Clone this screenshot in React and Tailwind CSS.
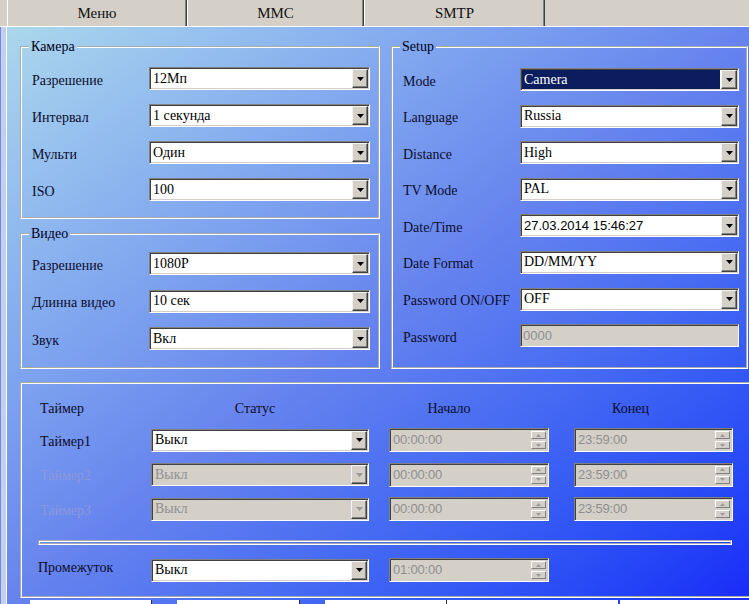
const SERIF = "font-['Liberation_Serif','Times_New_Roman',serif]";
const SANS = "font-['Liberation_Sans',Arial,sans-serif]";

const camera = [
  ['Разрешение', '12Мп'],
  ['Интервал', '1 секунда'],
  ['Мульти', 'Один'],
  ['ISO', '100'],
];

const video = [
  ['Разрешение', '1080P'],
  ['Длинна видео', '10 сек'],
  ['Звук', 'Вкл'],
];

const timers = [
  { name: 'Таймер1', on: true },
  { name: 'Таймер2', on: false },
  { name: 'Таймер3', on: false },
];

const DropArrow = ({ disabled }) => (
  <span className="flex h-full w-[16px] shrink-0 items-center justify-center border border-t-[#f4f4f4] border-l-[#f4f4f4] border-r-[#404040] border-b-[#404040] bg-[#d4d0c8] shadow-[inset_-1px_-1px_0_#808080]">
    <svg width="7" height="4" viewBox="0 0 7 4">
      <path d="M0 0h7L3.5 4z" fill={disabled ? '#9a9a9a' : '#000'} />
    </svg>
  </span>
);

const Combo = ({ value, selected, disabled, sans, className = '' }) => (
  <div
    className={`flex h-[23px] shrink-0 border border-t-[#808080] border-l-[#808080] border-r-white border-b-white p-[1px] shadow-[inset_1px_1px_0_#404040,inset_-1px_-1px_0_#d4d0c8] ${
      disabled ? 'bg-[#d4d0c8]' : 'bg-white'
    } ${className}`}
  >
    <div className="flex min-w-0 flex-1 items-center pr-[1px]">
      <span
        className={`flex h-full flex-1 items-center whitespace-nowrap pl-[2px] leading-none ${
          sans ? `${SANS} text-[13px]` : 'text-[14px]'
        } ${selected ? 'bg-[#0b1d5e] text-white' : disabled ? 'text-[#8f8f8f]' : 'text-black'}`}
      >
        {value}
      </span>
    </div>
    <DropArrow disabled={disabled} />
  </div>
);

const Edit = ({ value, className = '' }) => (
  <div
    className={`flex h-[23px] shrink-0 items-center border border-t-[#808080] border-l-[#808080] border-r-white border-b-white bg-[#d4d0c8] pl-[2px] shadow-[inset_1px_1px_0_#404040,inset_-1px_-1px_0_#d4d0c8] ${SANS} text-[13px] text-[#8f8f8f] ${className}`}
  >
    {value}
  </div>
);

const SpinBtn = ({ up }) => (
  <span className="flex h-[8px] w-[15px] items-center justify-center border border-t-white border-l-white border-r-[#808080] border-b-[#808080] bg-[#d4d0c8]">
    <svg width="5" height="3" viewBox="0 0 5 3">
      <path d={up ? 'M2.5 0L5 3H0z' : 'M0 0h5L2.5 3z'} fill="#9a9a9a" />
    </svg>
  </span>
);

const Spin = ({ value, className = '' }) => (
  <div
    className={`flex h-[24px] shrink-0 border border-t-[#808080] border-l-[#808080] border-r-white border-b-white bg-[#d4d0c8] p-[1px] shadow-[inset_1px_1px_0_#404040,inset_-1px_-1px_0_#d4d0c8] ${className}`}
  >
    <span className={`flex flex-1 items-center pl-[2px] ${SANS} text-[13px] tracking-[-0.2px] text-[#8f8f8f]`}>{value}</span>
    <div className="flex flex-col justify-center gap-[2px] pr-[1px]">
      <SpinBtn up />
      <SpinBtn />
    </div>
  </div>
);

const Group = ({ title, className = '', children }) => (
  <fieldset className={`border-2 border-white [border-style:groove] ${className}`}>
    <legend className="ml-[-3px] px-[2px] text-[14px] leading-[15px] text-[#000020]">{title}</legend>
    {children}
  </fieldset>
);

const Row = ({ label, children }) => (
  <div className="flex h-[23px] items-center">
    <span className="flex-1 whitespace-nowrap pt-[3px] text-[14px] text-[#0c0c2c]">{label}</span>
    {children}
  </div>
);

const Tab = ({ label, width }) => (
  <div
    className={`flex h-full items-center justify-center border-l border-l-white border-r border-r-[#404040] shadow-[inset_-1px_0_0_#808080] text-[15px] text-[#111] ${width}`}
  >
    {label}
  </div>
);

const App = () => {
  return (
    <div className={`flex h-[604px] w-[749px] flex-col overflow-hidden ${SERIF} text-[#0c0c2c]`}>
      {/* tabs */}
      <div className="flex h-[27px] shrink-0 border-b border-b-white bg-[#d4d0c8] pl-[7px]">
        <Tab label="Меню" width="w-[180px]" />
        <Tab label="MMC" width="w-[177px]" />
        <Tab label="SMTP" width="w-[181px]" />
      </div>

      <div className="flex min-h-0 flex-1 bg-linear-to-br from-[#acd8ec] via-[#6784ee] to-[#1a28f8]">
        <div className="w-[7px] shrink-0 border-l border-l-[#6f8ae0] border-r border-r-white bg-[#c4cfee]" />

        <div className="min-w-0 flex-1 overflow-hidden pl-[13px] pt-[12px]">
          <div className="flex gap-[11px]">
            {/* left column */}
            <div className="flex w-[360px] shrink-0 flex-col">
              <Group title="Камера" className="pl-[10px] pr-[8px] pt-[13px] pb-[16px]">
                <div className="flex flex-col gap-[14px]">
                  {camera.map(([label, value]) => (
                    <Row key={label} label={label}>
                      <Combo value={value} className="w-[221px]" />
                    </Row>
                  ))}
                </div>
              </Group>
              <Group title="Видео" className="mt-[7px] pl-[10px] pr-[8px] pt-[11px] pb-[17px]">
                <div className="flex flex-col gap-[14.5px]">
                  {video.map(([label, value]) => (
                    <Row key={label} label={label}>
                      <Combo value={value} className="w-[221px]" />
                    </Row>
                  ))}
                </div>
              </Group>
            </div>

            {/* setup */}
            <Group title="Setup" className="w-[357px] shrink-0 pl-[10px] pr-[7px] pt-[14px] pb-[20px]">
              <div className="flex flex-col gap-[13.6px]">
                <Row label="Mode">
                  <Combo value="Camera" selected className="w-[219px]" />
                </Row>
                <Row label="Language">
                  <Combo value="Russia" className="w-[219px]" />
                </Row>
                <Row label="Distance">
                  <Combo value="High" className="w-[219px]" />
                </Row>
                <Row label="TV Mode">
                  <Combo value="PAL" className="w-[219px]" />
                </Row>
                <Row label="Date/Time">
                  <Combo value="27.03.2014 15:46:27" sans className="w-[219px]" />
                </Row>
                <Row label="Date Format">
                  <Combo value="DD/MM/YY" className="w-[219px]" />
                </Row>
                <Row label="Password ON/OFF">
                  <Combo value="OFF" className="w-[219px]" />
                </Row>
                <Row label="Password">
                  <Edit value="0000" className="w-[219px]" />
                </Row>
              </div>
            </Group>
          </div>

          {/* timers */}
          <div className="mt-[13px] w-[745px] border-2 border-white pl-[18px] pt-[16px] pb-[14px] [border-style:groove]">
            <div className="flex h-[16px] items-center text-[14px] text-[#0c0c2c]">
              <span className="w-[111px]">Таймер</span>
              <span className="w-[218px] pr-[10px] text-center">Статус</span>
              <span className="ml-[20px] w-[160px] pr-[40px] text-center">Начало</span>
              <span className="ml-[25px] w-[159px] pr-[46px] text-center">Конец</span>
            </div>
            <div className="mt-[12px] flex flex-col gap-[10.5px]">
              {timers.map((t) => (
                <div key={t.name} className="flex h-[24px] items-center">
                  <span className={`w-[111px] pt-[2px] text-[14px] ${t.on ? 'text-[#0c0c2c]' : 'text-[#8c98dc]'}`}>{t.name}</span>
                  <Combo value="Выкл" disabled={!t.on} className="w-[218px]" />
                  <Spin value="00:00:00" className="ml-[20px] w-[160px]" />
                  <Spin value="23:59:00" className="ml-[25px] w-[159px]" />
                </div>
              ))}
            </div>
            <div className="ml-[-2px] mt-[19px] h-[5px] w-[694px] border-2 border-white [border-style:groove]" />
            <div className="mt-[13px] flex h-[24px] items-center">
              <span className="ml-[-2px] mb-[6px] w-[113px] text-[14px] text-[#0c0c2c]">Промежуток</span>
              <Combo value="Выкл" className="w-[218px]" />
              <Spin value="01:00:00" className="ml-[20px] w-[160px]" />
            </div>
          </div>

          {/* next row, cut off by the window */}
          <div className="mt-[2px] flex h-[6px] pl-[10px]">
            <div className="w-[123px] border-r border-r-[#303030] bg-white" />
            <div className="w-[25px]" />
            <div className="w-[124px] border-r border-r-[#303030] bg-white" />
            <div className="w-[25px]" />
            <div className="w-[123px] border-r border-r-[#303030] bg-white" />
            <div className="w-[172px] bg-white" />
            <div className="w-[2px]" />
            <div className="w-[130px] bg-white" />
          </div>
        </div>
      </div>
    </div>
  );
};

export default App;
